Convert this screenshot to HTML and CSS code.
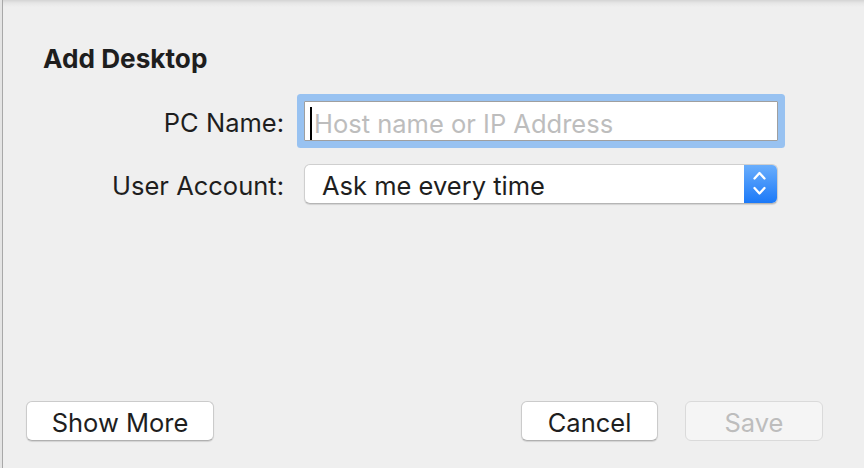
FILE: index.html
```html
<!DOCTYPE html>
<html>
<head>
<meta charset="utf-8">
<link rel="stylesheet" href="styles.css">
</head>
<body>
<div class="window">
  <h1 class="title">Add Desktop</h1>
  <div class="form">
    <label class="label">PC Name:</label>
    <div class="field"><span class="caret"></span><span class="placeholder">Host name or IP Address</span></div>
    <label class="label">User Account:</label>
    <div class="select">
      <span class="select-text">Ask me every time</span>
      <span class="stepper">
        <svg width="33" height="40" viewBox="0 0 33 40"><path d="M10.5 14.5 L15.5 9 L20.5 14.5 M10.5 24 L15.5 29.5 L20.5 24" fill="none" stroke="#fff" stroke-width="2.3" stroke-linecap="round" stroke-linejoin="round"/></svg>
      </span>
    </div>
  </div>
  <div class="buttons">
    <button class="btn btn-more">Show More</button>
    <div class="right">
      <button class="btn btn-cancel">Cancel</button>
      <button class="btn btn-save" disabled>Save</button>
    </div>
  </div>
</div>
</body>
</html>
```
FILE: styles.css
```css
html, body {
  margin: 0;
  padding: 0;
}
body {
  width: 864px;
  height: 468px;
  background: #e4e4e4;
  overflow: hidden;
  font-family: Inter, "Liberation Sans", sans-serif;
  color: #1e1e1e;
}
.window {
  box-sizing: border-box;
  margin-left: 2px;
  height: 468px;
  border-left: 1px solid #a8a8a8;
  background: linear-gradient(#d4d4d4 0px, #e6e6e6 3px, #efefef 7px, #efefef 100%);
  display: flex;
  flex-direction: column;
}
.title {
  margin: 0;
  padding: 44px 0 0 40px;
  font-size: 26.2px;
  font-weight: 700;
  line-height: 30px;
  letter-spacing: 0;
}
.form {
  margin-top: 27px;
  display: grid;
  grid-template-columns: 281px 474px;
  column-gap: 20px;
  row-gap: 23px;
  align-items: center;
}
.label {
  text-align: right;
  font-size: 25.5px;
  line-height: 30px;
  padding-top: 4px;
}
.field {
  box-sizing: border-box;
  height: 40px;
  background: #fff;
  border: 1px solid #9f9f9f;
  box-shadow: 0 0 0 7px #98c2f1;
  border-radius: 1px;
  display: flex;
  align-items: center;
  padding-left: 5px;
}
.caret {
  width: 2px;
  height: 33px;
  background: #000;
  margin-right: 2px;
  margin-top: 4px;
}
.placeholder {
  font-size: 25.5px;
  color: #bdbdbd;
  padding-top: 4px;
}
.select {
  box-sizing: border-box;
  height: 40px;
  background: #fff;
  border: 1px solid #cfcfcf;
  border-bottom-color: #b5b5b5;
  border-radius: 6px;
  box-shadow: 0 1px 1px rgba(0,0,0,0.12);
  display: flex;
  align-items: stretch;
  overflow: hidden;
}
.select-text {
  flex: 1;
  font-size: 25.5px;
  line-height: 38px;
  padding-left: 17px;
  padding-top: 2px;
}
.stepper {
  width: 33px;
  background: linear-gradient(#6aaefc, #1b79f8);
  display: flex;
  align-items: center;
  justify-content: center;
}
.stepper svg {
  display: block;
}
.buttons {
  margin-top: auto;
  margin-bottom: 27px;
  display: flex;
  justify-content: space-between;
  align-items: center;
  padding: 0 41px 0 23px;
}
.right {
  display: flex;
  gap: 27px;
}
.btn {
  box-sizing: border-box;
  height: 40px;
  background: #fff;
  border: 1px solid #cbcbcb;
  border-bottom-color: #b0b0b0;
  border-radius: 6px;
  box-shadow: 0 1px 1px rgba(0,0,0,0.12);
  font-family: Inter, "Liberation Sans", sans-serif;
  font-size: 25.5px;
  color: #1e1e1e;
  padding: 2px 0 0 0;
}
.btn-more { width: 188px; }
.btn-cancel { width: 137px; }
.btn-save {
  width: 138px;
  background: #f5f5f5;
  border-color: #dadada;
  box-shadow: none;
  color: #bdbdbd;
}
```
